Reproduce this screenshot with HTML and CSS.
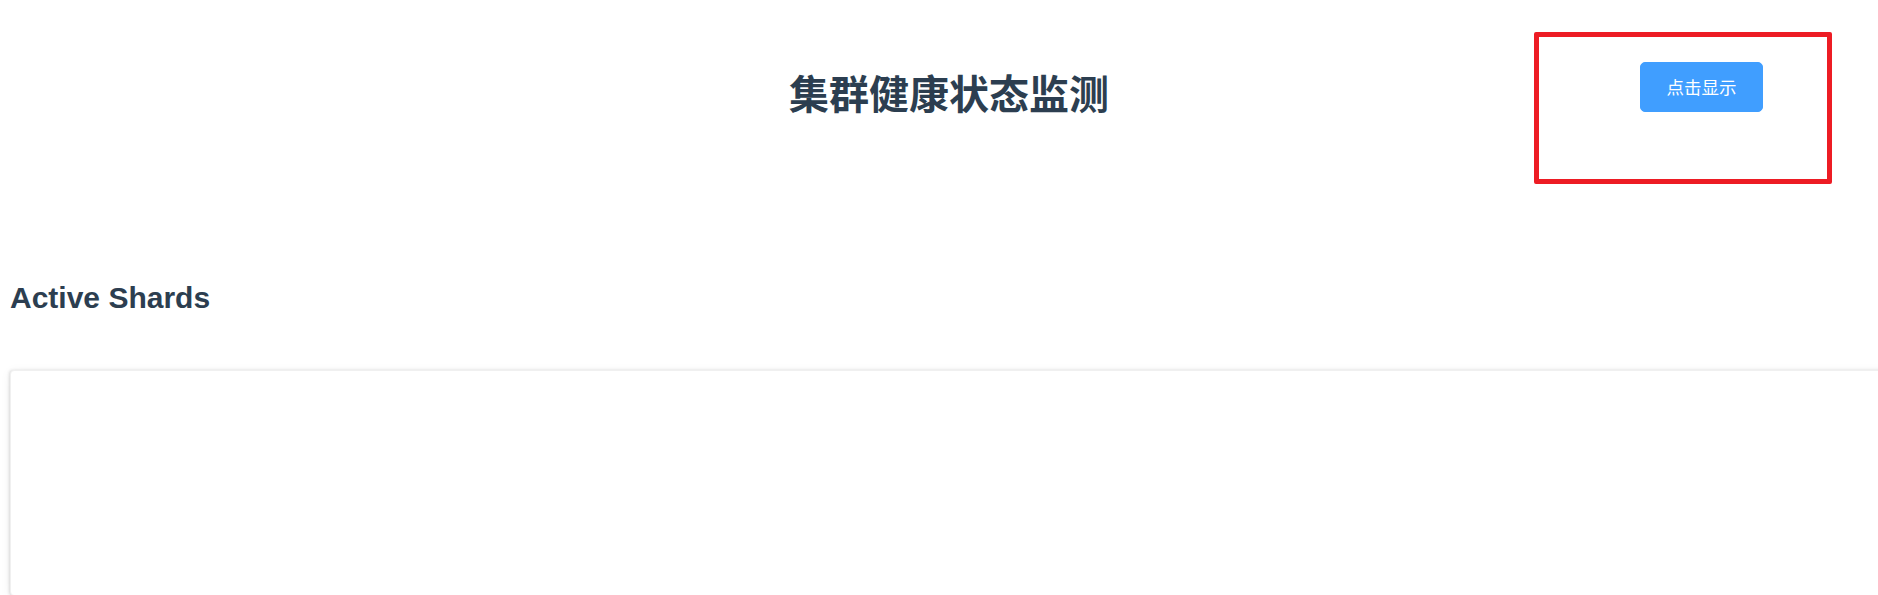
FILE: index.html
```html
<!DOCTYPE html>
<html lang="zh-CN">
<head>
<meta charset="utf-8">
<title>集群健康状态监测</title>
<link rel="stylesheet" href="styles.css">
</head>
<body>
  <div class="app">
    <header class="header">
      <h1 class="title">集群健康状态监测</h1>
      <div class="panel">
        <button class="btn-primary" type="button">点击显示</button>
      </div>
    </header>
    <h2 class="section-title">Active Shards</h2>
    <div class="card"></div>
  </div>
</body>
</html>
```

FILE: styles.css
```css
html, body {
  margin: 0;
  padding: 0;
  background: #ffffff;
}

body {
  padding: 10px;
  overflow: hidden;
  height: 595px;
  box-sizing: border-box;
  font-family: "Liberation Sans", "Noto Sans CJK SC", sans-serif;
  color: #2c3e50;
}

.header {
  display: grid;
  grid-template-columns: 1fr auto 1fr;
  padding-top: 22px;
  padding-left: 20px;
}

.title {
  grid-column: 2;
  margin: 40px 0 0 0;
  font-family: "Noto Sans CJK SC", sans-serif;
  font-size: 40px;
  line-height: 40px;
  font-weight: 700;
  color: #2c3e50;
  white-space: nowrap;
}

.panel {
  grid-column: 3;
  justify-self: end;
  margin-right: 36px;
  width: 298px;
  height: 152px;
  box-sizing: border-box;
  border: 5px solid #ed1c24;
  border-radius: 2px;
  padding: 25px 0 0 101px;
}

.btn-primary {
  display: block;
  width: 123px;
  height: 50px;
  box-sizing: border-box;
  padding: 0;
  background: #409eff;
  border: 1px solid #409eff;
  border-radius: 5px;
  color: #ffffff;
  font-family: "Noto Sans CJK SC", sans-serif;
  font-size: 17.5px;
  line-height: 1;
  cursor: pointer;
}

.section-title {
  margin: 96px 0 0 0;
  font-family: "Liberation Sans", Arial, sans-serif;
  font-size: 30px;
  line-height: 36px;
  font-weight: 700;
  color: #2c3e50;
}

.card {
  margin-top: 54px;
  margin-right: -30px;
  height: 224px;
  background: #ffffff;
  border: 1px solid #f0f0f0;
  border-radius: 4px;
  box-shadow: -1px 0 3px 0 rgba(0, 0, 0, 0.12), 0 2px 12px 0 rgba(0, 0, 0, 0.06);
}
```
